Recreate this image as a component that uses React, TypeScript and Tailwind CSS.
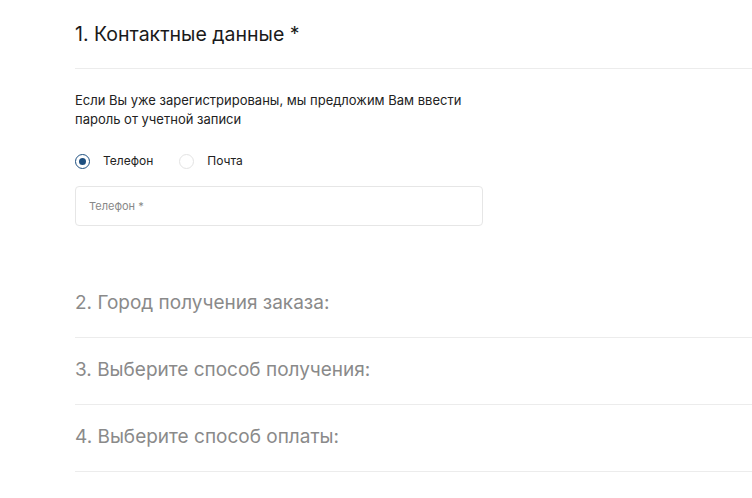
import React, { useState } from 'react';

const sections = ['2. Город получения заказа:', '3. Выберите способ получения:', '4. Выберите способ оплаты:'];

const Radio = ({ checked, label, onClick }: { checked: boolean; label: string; onClick: () => void }) => (
  <button onClick={onClick} className="flex items-center gap-[13px] text-[12px] text-[#222]">
    <span
      className={`w-[15px] h-[15px] rounded-full border flex items-center justify-center ${
        checked ? 'border-[#1d4f80]' : 'border-[#e3e3e3]'
      }`}
    >
      {checked && <span className="w-[7px] h-[7px] rounded-full bg-[#1d4f80]" />}
    </span>
    {label}
  </button>
);

export default function App() {
  const [mode, setMode] = useState<'phone' | 'mail'>('phone');

  return (
    <div className="w-[752px] h-[498px] bg-white overflow-hidden pl-[75px] font-['Inter',sans-serif]">
      {/* Contacts */}
      <div className="pt-[20px]">
        <h2 className="text-[19.5px] leading-[28px] text-[#1a1a1a]">1. Контактные данные *</h2>
        <div className="mt-[20px] h-px bg-[#ececec]" />
        <p className="mt-[22px] text-[13px] leading-[19px] text-[#222] w-[400px]">
          Если Вы уже зарегистрированы, мы предложим Вам ввести пароль от учетной записи
        </p>
        <div className="mt-[23px] flex items-center gap-[26px]">
          <Radio checked={mode === 'phone'} label="Телефон" onClick={() => setMode('phone')} />
          <Radio checked={mode === 'mail'} label="Почта" onClick={() => setMode('mail')} />
        </div>
        <input
          placeholder={mode === 'phone' ? 'Телефон *' : 'Почта *'}
          className="mt-[16px] w-[408px] h-[40px] rounded-[4px] border border-[#e6e6e6] px-[13px] text-[11px] text-[#333] placeholder:text-[#888] outline-none"
        />
      </div>

      {/* Other steps */}
      <div className="mt-[63px]">
        {sections.map((s) => (
          <div key={s}>
            <h3 className="text-[19px] leading-[28px] text-[#8a8a8a]">{s}</h3>
            <div className="mt-[20px] mb-[18px] h-px bg-[#ececec]" />
          </div>
        ))}
      </div>
    </div>
  );
}
